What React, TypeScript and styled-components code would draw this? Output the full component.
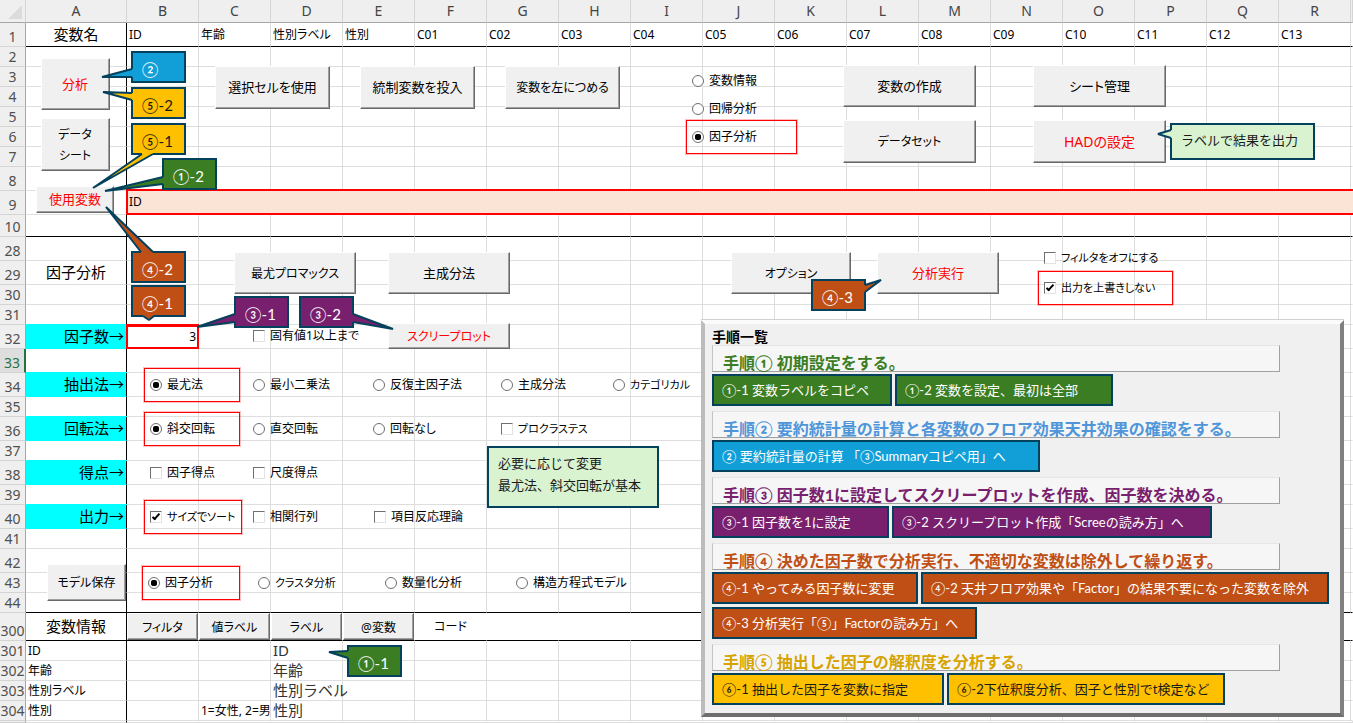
import React from "react";
import styled, { createGlobalStyle, css } from "styled-components";

const GlobalStyle = createGlobalStyle`
  *, *::before, *::after { box-sizing: border-box; }
  body {
    margin: 0;
    background: #fff;
    color: #000;
    font-family: "Noto Sans", "Noto Sans CJK JP", sans-serif;
    font-size: 12px;
  }
`;

const INK = "#03415c";
const GRID = "#dedede";

const palette = {
  blue: { bg: "#129fd8", fg: "#ffffff", heading: "#4e95d9" },
  green: { bg: "#3b7d23", fg: "#ffffff", heading: "#3b7d23" },
  purple: { bg: "#78206e", fg: "#ffffff", heading: "#78206e" },
  orange: { bg: "#c04f15", fg: "#ffffff", heading: "#c04f15" },
  yellow: { bg: "#ffc000", fg: "#1a1a1a", heading: "#d6a300" },
  mint: { bg: "#d9f2d0", fg: "#1a1a1a", heading: "#3b7d23" },
};
type Tone = keyof typeof palette;

/* ---------- worksheet grid ---------- */

const Sheet = styled.main`
  position: relative;
  min-height: 100vh;
  overflow: hidden;
`;

const Grid = styled.table`
  width: 100%;
  min-width: 1352px;
  height: 100vh;
  table-layout: fixed;
  border-collapse: separate;
  border-spacing: 0;
`;

const Col = styled.col<{ $w?: number }>`
  ${(p) => p.$w && `width: ${p.$w}px;`}
`;

const Row = styled.tr<{ $h?: number }>`
  ${(p) => p.$h && `height: ${p.$h}px;`}
`;

const ColumnHead = styled.th`
  padding: 0;
  background: #efefef;
  border-right: 1px solid #d4d4d4;
  border-bottom: 1px solid #a6a6a6;
  color: #444;
  font-size: 14px;
  font-weight: 400;
  line-height: 20px;
  text-align: center;
`;

const Corner = styled(ColumnHead)`
  text-align: right;
  vertical-align: bottom;
  svg { display: block; margin: 0 3px 3px auto; }
`;

const RowHead = styled.th<{ $active?: boolean }>`
  padding: 0;
  background: ${(p) => (p.$active ? "#dedede" : "#efefef")};
  border-right: ${(p) => (p.$active ? "2px solid #217346" : "1px solid #a6a6a6")};
  border-bottom: 1px solid #d4d4d4;
  color: ${(p) => (p.$active ? "#217346" : "#505050")};
  font-size: 14px;
  font-weight: 400;
  line-height: 19px;
  text-align: center;
  vertical-align: bottom;
`;

type CellLook = "title" | "arrow" | "list" | "picked" | "center" | "buttonHost";

const looks: Record<CellLook, ReturnType<typeof css>> = {
  title: css`padding-bottom: 2px; font-size: 15px; text-align: center;`,
  arrow: css`
    padding-bottom: 2px;
    font-size: 15px;
    text-align: right;
    background: #0ff;
    border-bottom-color: #0ff;
    box-shadow: 0 -1px #0ff;
  `,
  list: css`
    padding-bottom: 2px;
    font-size: 15px;
    line-height: 16px;
    color: #333;
    font-feature-settings: normal;
    overflow: visible;
  `,
  picked: css`
    padding-right: 1px;
    text-align: right;
    border: 2px solid #f00;
    border-left-width: 1px;
    box-shadow: -1px 0 #f00, 0 -1px #f00, -1px -1px #f00;
  `,
  center: css`text-align: center;`,
  buttonHost: css`padding: 0;`,
};

const Cell = styled.td<{ $look?: CellLook; $first?: boolean; $rule?: boolean; $open?: boolean }>`
  padding: 0 2px;
  border-right: 1px solid ${(p) => (p.$first ? "#000" : p.$open ? "transparent" : GRID)};
  border-bottom: 1px solid ${(p) => (p.$rule ? "#000" : GRID)};
  font-size: 12px;
  line-height: 18px;
  white-space: nowrap;
  overflow: hidden;
  font-feature-settings: "palt";
  ${(p) => p.$look && looks[p.$look]}
`;

const MergedCell = styled.td`
  padding: 0 1px;
  background: #fbe3d6;
  border-left: 1px solid #f00;
  border-bottom: 2px solid #f00;
  box-shadow: -1px 0 #f00, 0 -2px #f00, -1px -2px #f00;
  font-size: 12px;
  line-height: 18px;
`;

/* ---------- form controls ---------- */

const face = css`
  padding: 0;
  background: #f0f0f0;
  border: 1px solid;
  border-color: #fff #696969 #696969 #fff;
  box-shadow: inset -1px -1px #a0a0a0;
  font-family: inherit;
  font-feature-settings: "palt";
`;

const SheetButton = styled.button<{ $w: number; $h?: number; $red?: boolean; $size?: 12 | 13 | 14 }>`
  ${face}
  flex: none;
  width: ${(p) => p.$w}px;
  height: ${(p) => p.$h ?? 42}px;
  color: ${(p) => (p.$red ? "#f00" : "#000")};
  font-size: ${(p) => p.$size ?? 13}px;
  line-height: 21px;
  white-space: pre-line;
`;

const CellButton = styled.button`
  ${face}
  display: block;
  width: 100%;
  height: 27px;
  font-size: 12px;
`;

const OptionGroup = styled.fieldset<{ $cols?: string; $gap?: number }>`
  display: grid;
  grid-template-columns: ${(p) => p.$cols ?? "auto"};
  align-content: start;
  row-gap: ${(p) => p.$gap ?? 0}px;
  margin: 0;
  padding: 0;
  border: 0;
  min-width: 0;
`;

const OptionLabel = styled.label<{ $frame?: number; $small?: boolean }>`
  position: relative;
  display: flex;
  align-items: center;
  gap: 5px;
  height: 18px;
  font-size: ${(p) => (p.$small ? 11 : 12)}px;
  line-height: 18px;
  white-space: nowrap;
  font-feature-settings: "palt";
  ${(p) =>
    p.$frame &&
    css`
      &::before {
        content: "";
        position: absolute;
        left: -6px;
        top: -8px;
        width: ${p.$frame}px;
        height: 34px;
        border: 1px solid #f00;
        box-shadow: 0 0 0 1px rgba(255, 0, 0, 0.25);
        pointer-events: none;
      }
    `}
`;

const Radio = styled.input`
  appearance: none;
  flex: none;
  display: grid;
  place-items: center;
  width: 12px;
  height: 12px;
  margin: 0;
  background: #fff;
  border: 1px solid #6e6e6e;
  border-radius: 50%;
  &:checked::after {
    content: "";
    width: 6px;
    height: 6px;
    border-radius: 2px;
    background: #000;
  }
`;

const Tick = styled.input`
  appearance: none;
  flex: none;
  display: grid;
  place-items: center;
  width: 12px;
  height: 12px;
  margin: 0;
  background: #fff;
  border: 1px solid;
  border-color: #707070 #e3e3e3 #e3e3e3 #707070;
  &:checked::after {
    content: "";
    width: 4px;
    height: 8px;
    margin-bottom: 2px;
    border: solid #000;
    border-width: 0 2px 2px 0;
    transform: rotate(42deg);
  }
`;

interface Choice {
  text: string;
  box?: boolean;
  on?: boolean;
  frame?: number;
  small?: boolean;
}

function Options(props: { cols?: string; gap?: number; name: string; label: string; items: Choice[] }) {
  return (
    <OptionGroup $cols={props.cols} $gap={props.gap} aria-label={props.label}>
      {props.items.map((it) => (
        <OptionLabel key={it.text} $frame={it.frame} $small={it.small}>
          {it.box ? (
            <Tick type="checkbox" defaultChecked={it.on} />
          ) : (
            <Radio type="radio" name={props.name} defaultChecked={it.on} />
          )}
          {it.text}
        </OptionLabel>
      ))}
    </OptionGroup>
  );
}

/* ---------- bands of controls laid over the cells ---------- */

const ControlLayer = styled.div`
  position: absolute;
  inset: 0 0 auto;
  display: flex;
  flex-direction: column;
  gap: 36px;
  padding-top: 58px;
`;

const ToolBand = styled.div`
  display: grid;
  grid-template-columns: 179px 477px 151px auto;
  justify-content: start;
  padding-left: 36px;
`;

const SideButtons = styled.div`
  display: flex;
  flex-direction: column;
  align-items: center;
  width: 78px;
  gap: 8px;
  button:last-child { margin-top: 7px; }
`;

const ButtonRow = styled.div<{ $gap: number }>`
  display: flex;
  gap: ${(p) => p.$gap}px;
`;

const ButtonGrid = styled.div`
  display: grid;
  grid-template-columns: 133px 133px;
  align-content: start;
  gap: 13px 57px;
`;

const Lowered = styled.div<{ $by: number }>`
  padding-top: ${(p) => p.$by}px;
`;

const AnalysisArea = styled.div`
  display: flex;
  flex-direction: column;
  gap: 26px;
`;

const AnalysisBand = styled.div`
  display: grid;
  grid-template-columns: 497px 313px auto;
  justify-content: start;
  align-items: center;
  padding-left: 234px;
`;

const FactorBand = styled.div`
  display: grid;
  grid-template-columns: 135px auto;
  justify-content: start;
  align-items: center;
  padding-left: 253px;
`;

const OptionList = styled.div`
  display: flex;
  flex-direction: column;
  gap: 26px;
  padding: 1px 0 2px 150px;
`;

const ModelBand = styled.div`
  display: flex;
  align-items: center;
  gap: 22px;
  padding-left: 47px;
`;

function Controls() {
  return (
    <ControlLayer>
      <ToolBand>
        <SideButtons>
          <SheetButton type="button" $w={69} $h={52} $red>分析</SheetButton>
          <SheetButton type="button" $w={69} $h={53} $size={12}>{"データ\nシート"}</SheetButton>
          <SheetButton type="button" $w={78} $h={27} $red>使用変数</SheetButton>
        </SideButtons>
        <Lowered $by={8}>
          <ButtonRow $gap={30}>
            <SheetButton type="button" $w={115} $h={43}>選択セルを使用</SheetButton>
            <SheetButton type="button" $w={115} $h={43}>統制変数を投入</SheetButton>
            <SheetButton type="button" $w={115} $h={43} $size={12}>変数を左につめる</SheetButton>
          </ButtonRow>
        </Lowered>
        <Lowered $by={14}>
          <Options gap={10} name="mode" label="分析の種類"
            items={[{ text: "変数情報" }, { text: "回帰分析" }, { text: "因子分析", on: true, frame: 111 }]} />
        </Lowered>
        <Lowered $by={7}>
          <ButtonGrid>
            <SheetButton type="button" $w={133}>変数の作成</SheetButton>
            <SheetButton type="button" $w={133}>シート管理</SheetButton>
            <SheetButton type="button" $w={133} $h={43} $size={12}>データセット</SheetButton>
            <SheetButton type="button" $w={133} $h={43} $red $size={14}>HADの設定</SheetButton>
          </ButtonGrid>
        </Lowered>
      </ToolBand>

      <AnalysisArea>
        <AnalysisBand>
          <ButtonRow $gap={32}>
            <SheetButton type="button" $w={122} $size={12}>最尤プロマックス</SheetButton>
            <SheetButton type="button" $w={122}>主成分法</SheetButton>
          </ButtonRow>
          <ButtonRow $gap={26}>
            <SheetButton type="button" $w={120} $size={12}>オプション</SheetButton>
            <SheetButton type="button" $w={122} $red>分析実行</SheetButton>
          </ButtonRow>
          <Options gap={12} name="output" label="出力の設定"
            items={[
              { text: "フィルタをオフにする", box: true, small: true },
              { text: "出力を上書きしない", box: true, on: true, frame: 135, small: true },
            ]} />
        </AnalysisBand>
        <FactorBand>
          <Options name="eigen" label="因子数" items={[{ text: "固有値1以上まで", box: true }]} />
          <SheetButton type="button" $w={122} $h={26} $red $size={12}>スクリープロット</SheetButton>
        </FactorBand>
        <OptionList>
          <Options cols="103px 120px 128px 112px auto" name="extract" label="抽出法"
            items={[
              { text: "最尤法", on: true, frame: 96 }, { text: "最小二乗法" }, { text: "反復主因子法" },
              { text: "主成分法" }, { text: "カテゴリカル", small: true },
            ]} />
          <Options cols="103px 120px 128px auto" name="rotate" label="回転法"
            items={[
              { text: "斜交回転", on: true, frame: 96 }, { text: "直交回転" }, { text: "回転なし" },
              { text: "プロクラステス", box: true, small: true },
            ]} />
          <Options cols="103px auto" name="score" label="得点"
            items={[{ text: "因子得点", box: true }, { text: "尺度得点", box: true }]} />
          <Options cols="103px 121px auto" name="print" label="出力"
            items={[
              { text: "サイズでソート", box: true, on: true, frame: 98, small: true },
              { text: "相関行列", box: true }, { text: "項目反応理論", box: true },
            ]} />
        </OptionList>
      </AnalysisArea>

      <ModelBand>
        <SheetButton type="button" $w={79} $h={37} $size={12}>モデル保存</SheetButton>
        <Options cols="110px 127px 131px auto" name="model" label="モデル"
          items={[
            { text: "因子分析", on: true, frame: 98 }, { text: "クラスタ分析", small: true },
            { text: "数量化分析" }, { text: "構造方程式モデル" },
          ]} />
      </ModelBand>
    </ControlLayer>
  );
}

/* ---------- callouts ---------- */

const CalloutBox = styled.div<{ $x: number; $y: number; $w: number; $h: number; $tone: Tone; $note?: boolean }>`
  position: absolute;
  left: ${(p) => p.$x}px;
  top: ${(p) => p.$y}px;
  width: ${(p) => p.$w}px;
  height: ${(p) => p.$h}px;
  padding: ${(p) => (p.$note ? "4px 9px 0" : "6px 9px 0")};
  background: ${(p) => palette[p.$tone].bg};
  border: 2px solid ${INK};
  color: ${(p) => palette[p.$tone].fg};
  font-family: Lato, "Noto Sans CJK JP", sans-serif;
  font-size: ${(p) => (p.$note ? 13 : 15)}px;
  line-height: ${(p) => (p.$note ? 22 : 20)}px;
  white-space: pre;
`;

const TailSvg = styled.svg`
  position: absolute;
  left: -2px;
  top: -2px;
  overflow: visible;
  pointer-events: none;
`;

interface Tail {
  side: "left" | "right" | "top" | "bottom";
  from: number;
  to: number;
  tip: [number, number];
}

interface Note {
  x: number;
  y: number;
  w?: number;
  h?: number;
  tone: Tone;
  tail?: Tail;
  note?: boolean;
  text: string;
}

function Callout({ x, y, w = 55, h = 32, tone, tail, note, text }: Note) {
  let tailDrawing: React.ReactNode = null;
  if (tail) {
    // Base points on the border's centre line, and again just inside it so the fill covers the border.
    const at = (v: number, depth: number): string => {
      if (tail.side === "left") return `${depth},${v}`;
      if (tail.side === "right") return `${w - depth},${v}`;
      if (tail.side === "top") return `${v},${depth}`;
      return `${v},${h - depth}`;
    };
    const tip = tail.tip.join(",");
    tailDrawing = (
      <TailSvg width={w} height={h} aria-hidden="true">
        <polygon
          points={`${at(tail.from, 3)} ${at(tail.from, 1)} ${tip} ${at(tail.to, 1)} ${at(tail.to, 3)}`}
          fill={palette[tone].bg}
        />
        <polyline
          points={`${at(tail.from, 1)} ${tip} ${at(tail.to, 1)}`}
          fill="none"
          stroke={INK}
          strokeWidth="2"
          strokeLinejoin="bevel"
        />
      </TailSvg>
    );
  }
  return (
    <CalloutBox $x={x} $y={y} $w={w} $h={h} $tone={tone} $note={note}>
      {text}
      {tailDrawing}
    </CalloutBox>
  );
}

const notes: Note[] = [
  { x: 131, y: 51, tone: "blue", text: "②", tail: { side: "left", from: 18, to: 26, tip: [-29, 26] } },
  { x: 131, y: 87, tone: "yellow", text: "⑤-2", tail: { side: "left", from: 6, to: 13, tip: [-28, 5] } },
  { x: 131, y: 123, tone: "yellow", text: "⑤-1", tail: { side: "bottom", from: 11, to: 22, tip: [-38, 65] } },
  { x: 162, y: 158, tone: "green", text: "①-2", tail: { side: "left", from: 19, to: 26, tip: [-57, 33] } },
  { x: 131, y: 251, tone: "orange", text: "④-2", tail: { side: "top", from: 10, to: 22, tip: [-25, -44] } },
  { x: 131, y: 285, tone: "orange", text: "④-1", tail: { side: "bottom", from: 12, to: 23, tip: [18, 35] } },
  { x: 234, y: 296, tone: "purple", text: "③-1", tail: { side: "left", from: 18, to: 26, tip: [-37, 31] } },
  { x: 299, y: 296, tone: "purple", text: "③-2", tail: { side: "right", from: 18, to: 26, tip: [94, 33] } },
  { x: 811, y: 279, tone: "orange", text: "④-3", tail: { side: "right", from: 6, to: 13, tip: [70, 1] } },
  { x: 347, y: 645, tone: "green", text: "①-1", tail: { side: "left", from: 6, to: 13, tip: [-18, 7] } },
  { x: 1170, y: 123, w: 145, h: 37, tone: "mint", note: true, text: "ラベルで結果を出力", tail: { side: "left", from: 7, to: 15, tip: [-12, 11] } },
  { x: 487, y: 446, w: 172, h: 62, tone: "mint", note: true, text: "必要に応じて変更\n最尤法、斜交回転が基本" },
];

/* ---------- procedure panel ---------- */

const Panel = styled.section`
  position: absolute;
  left: 701px;
  top: 320px;
  width: 643px;
  padding: 0 0 3px 7px;
  background: #f0f0f0;
  border: 4px solid;
  border-color: #fbfbfb #808080 #6e6e6e #bcbcbc;
  box-shadow: 0 -1px #d0d0d0;
`;

const PanelTitle = styled.h2`
  margin: 0;
  height: 21px;
  padding-top: 3px;
  font-size: 14px;
  font-weight: 700;
  line-height: 20px;
`;

const Step = styled.div`
  display: flex;
  flex-direction: column;
  gap: 2px;
  margin-bottom: 5px;
`;

const StepTitle = styled.h3<{ $tone: Tone }>`
  width: 568px;
  height: 27px;
  margin: 0;
  padding: 7px 10px 0;
  background: #f6f6f6;
  border: 1px solid;
  border-color: #e6e6e6 #a0a0a0 #a0a0a0 #c4c4c4;
  color: ${(p) => palette[p.$tone].heading};
  font-family: Lato, "Noto Sans CJK JP", sans-serif;
  font-size: 16px;
  font-weight: 700;
  line-height: 20px;
  white-space: nowrap;
`;

const Chips = styled.div`
  display: flex;
  flex-wrap: wrap;
  gap: 3px;
`;

const Chip = styled.div<{ $tone: Tone; $w: number }>`
  width: ${(p) => p.$w}px;
  height: 32px;
  padding-left: 8px;
  background: ${(p) => palette[p.$tone].bg};
  border: 2px solid ${INK};
  color: ${(p) => palette[p.$tone].fg};
  font-family: Lato, "Noto Sans CJK JP", sans-serif;
  font-size: 13px;
  line-height: 28px;
  white-space: pre;
`;

const steps: { tone: Tone; title: string; chips: [string, number][] }[] = [
  { tone: "green", title: "手順① 初期設定をする。", chips: [["①-1 変数ラベルをコピペ", 180], ["①-2 変数を設定、最初は全部", 218]] },
  { tone: "blue", title: "手順② 要約統計量の計算と各変数のフロア効果天井効果の確認をする。", chips: [["② 要約統計量の計算 「③Summaryコピペ用」へ", 328]] },
  { tone: "purple", title: "手順③ 因子数1に設定してスクリープロットを作成、因子数を決める。", chips: [["③-1 因子数を1に設定", 177], ["③-2 スクリープロット作成「Screeの読み方」へ", 320]] },
  { tone: "orange", title: "手順④ 決めた因子数で分析実行、不適切な変数は除外して繰り返す。", chips: [["④-1 やってみる因子数に変更", 206], ["④-2 天井フロア効果や「Factor」の結果不要になった変数を除外", 408], ["④-3 分析実行「⑤」Factorの読み方」へ", 265]] },
  { tone: "yellow", title: "手順⑤ 抽出した因子の解釈度を分析する。", chips: [["⑥-1 抽出した因子を変数に指定", 232], ["⑥-2下位釈度分析、因子と性別でt検定など", 278]] },
];

/* ---------- sheet data ---------- */

const columns = "ABCDEFGHIJKLMNOPQR".split("");

interface SheetRow {
  n: number;
  h: number;
  rule?: boolean;
  cells?: Record<string, [string, CellLook?]>;
}

const headerCells: Record<string, [string, CellLook?]> = {
  A: ["変数名", "title"], B: ["ID"], C: ["年齢"], D: ["性別ラベル"], E: ["性別"],
};
columns.slice(5).forEach((c, i) => {
  headerCells[c] = ["C" + String(i + 1).padStart(2, "0")];
});

const rows: SheetRow[] = [
  { n: 1, h: 24, rule: true, cells: headerCells },
  { n: 2, h: 20 }, { n: 3, h: 20 }, { n: 4, h: 20 }, { n: 5, h: 20 }, { n: 6, h: 20 }, { n: 7, h: 20 },
  { n: 8, h: 24 },
  { n: 9, h: 24 },
  { n: 10, h: 22, rule: true },
  { n: 28, h: 24 },
  { n: 29, h: 24, cells: { A: ["因子分析", "title"] } },
  { n: 30, h: 20 }, { n: 31, h: 20 },
  { n: 32, h: 24, cells: { A: ["因子数→", "arrow"], B: ["3", "picked"] } },
  { n: 33, h: 24 },
  { n: 34, h: 24, cells: { A: ["抽出法→", "arrow"] } },
  { n: 35, h: 20 },
  { n: 36, h: 24, cells: { A: ["回転法→", "arrow"] } },
  { n: 37, h: 20 },
  { n: 38, h: 24, cells: { A: ["得点→", "arrow"] } },
  { n: 39, h: 20 },
  { n: 40, h: 24, cells: { A: ["出力→", "arrow"] } },
  { n: 41, h: 20 }, { n: 42, h: 24 }, { n: 43, h: 20 },
  { n: 44, h: 20, rule: true },
  {
    n: 300, h: 28, rule: true,
    cells: {
      A: ["変数情報", "title"], B: ["フィルタ", "buttonHost"], C: ["値ラベル", "buttonHost"],
      D: ["ラベル", "buttonHost"], E: ["@変数", "buttonHost"], F: ["コード", "center"],
    },
  },
  { n: 301, h: 20, cells: { A: ["ID"], D: ["ID", "list"] } },
  { n: 302, h: 20, cells: { A: ["年齢"], D: ["年齢", "list"] } },
  { n: 303, h: 20, cells: { A: ["性別ラベル"], D: ["性別ラベル", "list"] } },
  { n: 304, h: 20, cells: { A: ["性別"], C: ["1=女性, 2=男"], D: ["性別", "list"] } },
];

function Worksheet() {
  return (
    <Grid>
      <colgroup>
        <Col $w={26} />
        <Col $w={101} />
        {columns.slice(1).map((c) => <Col key={c} $w={72} />)}
        <Col />
      </colgroup>
      <thead>
        <Row $h={23}>
          <Corner as="td">
            <svg width="14" height="14" aria-hidden="true"><path d="M14 0V14H0Z" fill="#dcdcdc" /></svg>
          </Corner>
          {columns.map((c) => <ColumnHead key={c} scope="col">{c}</ColumnHead>)}
          <ColumnHead as="td" />
        </Row>
      </thead>
      <tbody>
        {rows.map((r) => (
          <Row key={r.n} $h={r.h}>
            <RowHead scope="row" $active={r.n === 33}>{r.n}</RowHead>
            {r.n === 9 ? (
              <>
                <Cell $first />
                <MergedCell colSpan={18}>ID</MergedCell>
              </>
            ) : (
              <>
                {columns.map((c) => {
                  const [text, look] = r.cells?.[c] ?? [""];
                  return (
                    <Cell key={c} $look={look} $first={c === "A"} $rule={r.rule} $open={r.n === 300}>
                      {look === "buttonHost" ? <CellButton type="button">{text}</CellButton> : text}
                    </Cell>
                  );
                })}
                <Cell $rule={r.rule} $open />
              </>
            )}
          </Row>
        ))}
        <Row>
          <RowHead as="td" />
          {columns.map((c) => <Cell key={c} $first={c === "A"} />)}
          <Cell />
        </Row>
      </tbody>
    </Grid>
  );
}

export default function App() {
  return (
    <Sheet>
      <GlobalStyle />
      <Worksheet />
      <Controls />
      {notes.map((n) => <Callout key={n.text} {...n} />)}
      <Panel>
        <PanelTitle>手順一覧</PanelTitle>
        {steps.map((s) => (
          <Step key={s.title}>
            <StepTitle $tone={s.tone}>{s.title}</StepTitle>
            <Chips>
              {s.chips.map(([text, w]) => <Chip key={text} $tone={s.tone} $w={w}>{text}</Chip>)}
            </Chips>
          </Step>
        ))}
      </Panel>
    </Sheet>
  );
}
